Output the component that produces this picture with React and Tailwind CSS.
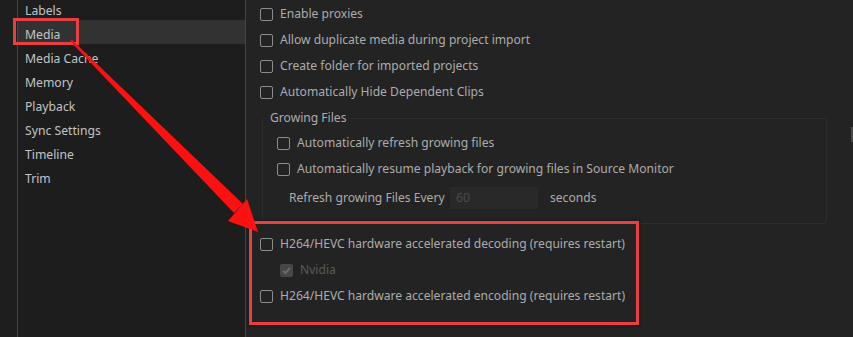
import React from "react";

const font = { fontFamily: '"Noto Sans", "Open Sans", sans-serif' };

function Box({ checked = false }) {
  if (checked) {
    return (
      <span className="flex h-[13px] w-[13px] shrink-0 items-center justify-center rounded-[2px] bg-[#474747]">
        <svg width="11" height="11" viewBox="0 0 11 11">
          <path d="M2 5.8 L4.4 8.2 L9 2.8" fill="none" stroke="#6c6c6c" strokeWidth="1.8" />
        </svg>
      </span>
    );
  }
  return <span className="h-[13px] w-[13px] shrink-0 rounded-[2px] border-[1.5px] border-[#8c8c8c]" />;
}

function Row({ label, checked, disabled, className = "" }) {
  return (
    <div className={"flex h-[26px] items-center gap-[7px] " + className}>
      <Box checked={checked} />
      <span className={disabled ? "text-[#5a5a5a]" : "text-[#acacac]"}>{label}</span>
    </div>
  );
}

const sideItems = ["Labels", "Media", "Media Cache", "Memory", "Playback", "Sync Settings", "Timeline", "Trim"];

export default function App() {
  return (
    <div className="relative flex h-[337px] w-[853px] overflow-hidden bg-[#1f1f1f] text-[12.1px]" style={font}>
      <div className="w-[17px] shrink-0 bg-[#1e1e1e]" />
      <div className="w-[1px] shrink-0 bg-[#2f4866]" />
      <div className="w-[227px] shrink-0 bg-[#1d1d1d]">
        <div className="-mt-[4px]">
          {sideItems.map((s) => (
            <div
              key={s}
              className={
                "flex h-[24px] items-center pl-[7px] pt-[7px] text-[12.2px] text-[#c4c4c4] " +
                (s === "Media" ? "bg-[#323232]" : "")
              }
            >
              {s}
            </div>
          ))}
        </div>
      </div>
      <div className="w-[1px] shrink-0 bg-[#2f4866]" />
      <div className="flex-1 bg-[#232323] pl-[14px] pt-[1px]">
        <Row label="Enable proxies" />
        <Row label="Allow duplicate media during project import" />
        <Row label="Create folder for imported projects" />
        <Row label="Automatically Hide Dependent Clips" />
        <fieldset className="ml-[2px] mt-[5px] w-[565px] rounded-[3px] border border-[#2d2d2d] pb-[14px] pl-[14px]">
          <legend className="-ml-[12px] px-[5px] leading-[16px] text-[#acacac]">Growing Files</legend>
          <div className="pt-[4px]">
            <Row label="Automatically refresh growing files" />
            <Row label="Automatically resume playback for growing files in Source Monitor" />
            <div className="mt-[5px] flex h-[22px] items-center pl-[12px] text-[#acacac]">
              <span className="w-[161px]">Refresh growing Files Every</span>
              <span className="flex h-[22px] w-[88px] items-center bg-[#292929] pl-[6px] text-[#4c4c4c]">60</span>
              <span className="ml-[12px]">seconds</span>
            </div>
          </div>
        </fieldset>
        <div className="mt-[7px]">
          <Row label="H264/HEVC hardware accelerated decoding (requires restart)" />
          <Row label="Nvidia" checked disabled className="gap-[5px] pl-[20px]" />
          <Row label="H264/HEVC hardware accelerated encoding (requires restart)" />
        </div>
      </div>
      <div className="absolute right-0 top-[127px] h-[15px] w-[2px] bg-[#4a4a4a]" />
      {/* annotation overlays */}
      <div className="pointer-events-none absolute left-[13px] top-[18px] h-[27px] w-[66px] border-[3px] border-[#e8403f]" />
      <div className="pointer-events-none absolute left-[249px] top-[221px] h-[104px] w-[390px] border-[3px] border-[#e8403f] shadow-[0_0_3px_rgba(0,0,0,0.6)]" />
      <svg className="pointer-events-none absolute left-0 top-0" width="853" height="337" viewBox="0 0 853 337">
        <polygon points="70,41 72,40 243,204 234,213" fill="#ff1010" />
        <polygon points="258,232 228,221 247,199" fill="#ff1010" />
      </svg>
    </div>
  );
}
